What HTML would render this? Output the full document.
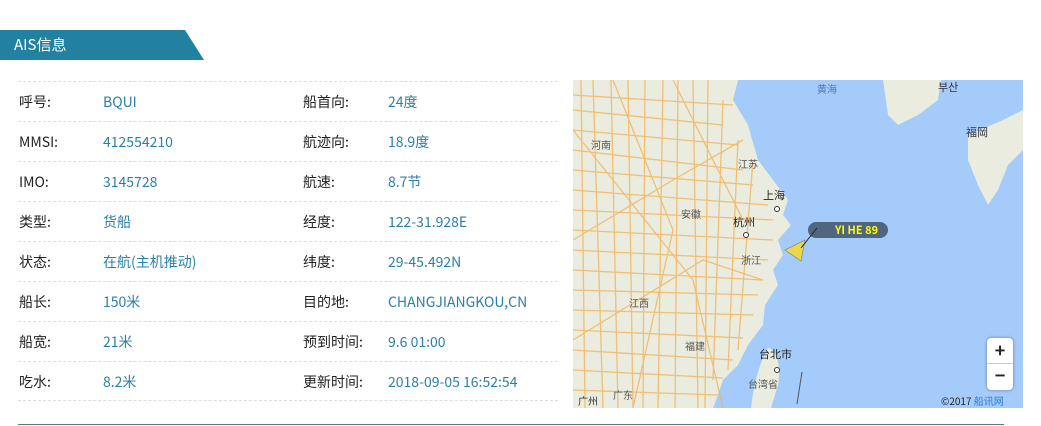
<!DOCTYPE html>
<html><head><meta charset="utf-8">
<style>
*{margin:0;padding:0;box-sizing:border-box}
body{width:1041px;height:426px;background:#fff;position:relative;overflow:hidden;font-family:"Noto Sans CJK SC",sans-serif;font-size:14px}
.hd{position:absolute;left:0;top:30px;width:204px;height:30px;background:#2280a0;clip-path:polygon(0 0,185px 0,204px 30px,0 30px)}
.hd span{position:absolute;left:14px;top:5px;color:#fff;font-size:15px;line-height:20px}
.row{position:absolute;left:18px;width:540px;height:40px;border-top:1px dashed #ddd}
.row.last{border-bottom:1px dashed #ddd}
.row span{position:absolute;top:11px;white-space:nowrap;line-height:18px}
.l{color:#222}.v{color:#2a7fa8}
.bl{position:absolute;left:18px;top:424px;width:986px;height:1px;background:#4a7f99}
.map{position:absolute;left:573px;top:80px;width:450px;height:328px;overflow:hidden;background:#a4cbfa}
.map span{line-height:12px}
</style></head><body>
<div class="hd"><span>AIS信息</span></div>
<div class="row" style="top:81px"><span class="l" style="left:1px">呼号:</span><span class="v" style="left:85px">BQUI</span><span class="l" style="left:285px">船首向:</span><span class="v" style="left:370px">24度</span></div>
<div class="row" style="top:121px"><span class="l" style="left:1px">MMSI:</span><span class="v" style="left:85px">412554210</span><span class="l" style="left:285px">航迹向:</span><span class="v" style="left:370px">18.9度</span></div>
<div class="row" style="top:161px"><span class="l" style="left:1px">IMO:</span><span class="v" style="left:85px">3145728</span><span class="l" style="left:285px">航速:</span><span class="v" style="left:370px">8.7节</span></div>
<div class="row" style="top:201px"><span class="l" style="left:1px">类型:</span><span class="v" style="left:85px">货船</span><span class="l" style="left:285px">经度:</span><span class="v" style="left:370px">122-31.928E</span></div>
<div class="row" style="top:241px"><span class="l" style="left:1px">状态:</span><span class="v" style="left:85px">在航(主机推动)</span><span class="l" style="left:285px">纬度:</span><span class="v" style="left:370px">29-45.492N</span></div>
<div class="row" style="top:281px"><span class="l" style="left:1px">船长:</span><span class="v" style="left:85px">150米</span><span class="l" style="left:285px">目的地:</span><span class="v" style="left:370px">CHANGJIANGKOU,CN</span></div>
<div class="row" style="top:321px"><span class="l" style="left:1px">船宽:</span><span class="v" style="left:85px">21米</span><span class="l" style="left:285px">预到时间:</span><span class="v" style="left:370px">9.6 01:00</span></div>
<div class="row last" style="top:361px"><span class="l" style="left:1px">吃水:</span><span class="v" style="left:85px">8.2米</span><span class="l" style="left:285px">更新时间:</span><span class="v" style="left:370px">2018-09-05 16:52:54</span></div>
<div class="bl"></div>
<div class="map">
<svg width="450" height="328" viewBox="0 0 450 328" style="position:absolute;left:0;top:0">
<path d="M0 0 L165 0 L160 20 L175 45 L185 80 L200 100 L215 120 L210 135 L218 145 L205 160 L210 175 L200 190 L205 205 L192 225 L190 245 L175 265 L165 285 L150 300 L145 315 L140 328 L0 328 Z" fill="#e9ecdf"/>
<path d="M195 268 C205 270 208 290 205 305 L198 328 L178 328 C180 310 185 285 195 268 Z" fill="#e9ecdf"/>
<path d="M310 0 L368 0 L365 20 L345 35 L325 45 L315 35 Z" fill="#e9ecdf"/>
<path d="M395 55 L430 40 L450 30 L450 70 L435 85 L425 110 L415 125 L405 105 L395 80 Z" fill="#e9ecdf"/>
<g stroke="#f3b45a" stroke-width="1.3" fill="none" opacity=".8">
<path d="M0 30 L150 45 M0 70 L170 90 M0 110 L195 125 M0 150 L200 160 M0 190 L190 200 M0 230 L180 235 M0 270 L160 280 M0 310 L145 315"/>
<path d="M0 15 L160 25 M0 50 L165 65 M0 90 L180 105 M0 130 L200 140 M0 170 L195 180 M0 210 L185 215 M0 250 L170 258 M0 290 L150 298"/>
<path d="M20 0 L30 328 M55 0 L60 328 M90 0 L85 328 M120 0 L125 328 M150 20 L140 300 M180 80 L165 270"/>
<path d="M8 0 L12 328 M38 0 L45 328 M72 0 L70 328 M105 0 L102 328 M135 0 L132 328 M165 60 L155 290"/>
<path d="M0 50 L120 200 L150 328 M40 0 L100 150 L60 328 M100 0 L170 140 M0 160 L100 100 L170 60 M0 260 L130 180 L190 200"/>
</g>
</svg>
<span style="position:absolute;left:244px;top:3px;font-size:10px;color:#4a78b8">黄海</span>
<span style="position:absolute;left:365px;top:1px;font-size:11px;color:#333">부산</span>
<span style="position:absolute;left:393px;top:46px;font-size:11px;color:#333">福岡</span>
<span style="position:absolute;left:18px;top:59px;font-size:10px;color:#555">河南</span>
<span style="position:absolute;left:165px;top:78px;font-size:10px;color:#555">江苏</span>
<span style="position:absolute;left:190px;top:109px;font-size:11px;color:#222">上海</span>
<span style="position:absolute;left:108px;top:128px;font-size:10px;color:#555">安徽</span>
<span style="position:absolute;left:160px;top:136px;font-size:11px;color:#222">杭州</span>
<span style="position:absolute;left:168px;top:174px;font-size:10px;color:#555">浙江</span>
<span style="position:absolute;left:56px;top:217px;font-size:10px;color:#555">江西</span>
<span style="position:absolute;left:112px;top:260px;font-size:10px;color:#555">福建</span>
<span style="position:absolute;left:186px;top:268px;font-size:11px;color:#222">台北市</span>
<span style="position:absolute;left:175px;top:298px;font-size:10px;color:#555">台湾省</span>
<span style="position:absolute;left:5px;top:315px;font-size:10px;color:#333">广州</span>
<span style="position:absolute;left:40px;top:309px;font-size:10px;color:#555">广东</span>
<div style="position:absolute;left:235px;top:142px;width:80px;height:16px;border-radius:8px;background:#4f6580"></div>
<span style="position:absolute;left:262px;top:144px;font-size:11px;font-weight:bold;color:#ffff00">YI HE 89</span>
<svg width="450" height="328" style="position:absolute;left:0;top:0">
<polygon points="212,170 232,160 228,181" fill="#e8d84a" stroke="#888" stroke-width=".7"/>
<line x1="228" y1="168" x2="244" y2="148" stroke="#222" stroke-width="1"/>
<line x1="229" y1="292" x2="224" y2="324" stroke="#555" stroke-width="1"/>
<circle cx="173" cy="155" r="2.5" fill="#fff" stroke="#333"/>
<circle cx="204" cy="129" r="2.5" fill="#fff" stroke="#333"/>
<circle cx="204" cy="290" r="2.5" fill="#fff" stroke="#333"/>
</svg>
<div style="position:absolute;left:414px;top:258px;width:26px;height:52px;background:#fff;border-radius:4px;box-shadow:0 0 3px rgba(0,0,0,.4)">
<div style="height:26px;border-bottom:1px solid #ccc;text-align:center;font-size:18px;font-weight:bold;line-height:25px;color:#222">+</div>
<div style="height:26px;text-align:center;font-size:18px;font-weight:bold;line-height:22px;color:#222">−</div>
</div>
<span style="position:absolute;left:368px;top:315px;font-size:10px;color:#222">©2017 <span style="color:#2a7fc8">船讯网</span></span>
</div>
</body></html>
